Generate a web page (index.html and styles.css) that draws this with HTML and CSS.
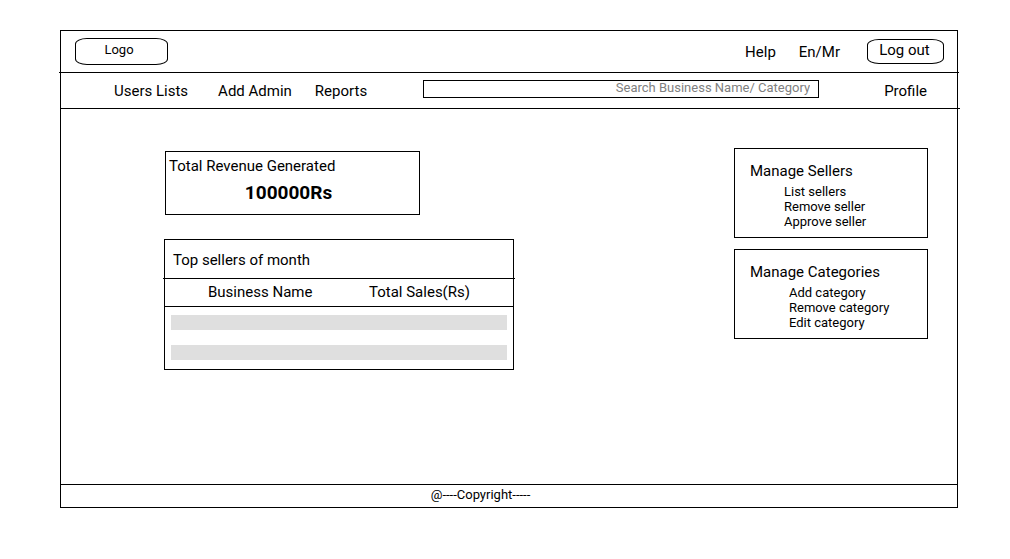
FILE: index.html
```html
<!DOCTYPE html>
<html lang="en">
<head>
<meta charset="utf-8">
<title>Admin Dashboard</title>
<link rel="stylesheet" href="styles.css">
</head>
<body>
<div class="page">
  <header class="topbar">
    <a class="logo" href="#">Logo</a>
    <div class="actions">
      <a class="help" href="#">Help</a>
      <a class="language" href="#">En/Mr</a>
      <button class="logout" type="button">Log out</button>
    </div>
  </header>
  <nav class="navbar">
    <div class="links">
      <a href="#">Users Lists</a>
      <a href="#">Add Admin</a>
      <a href="#">Reports</a>
    </div>
    <input class="search" type="text" aria-label="Search" placeholder="Search Business Name/ Category">
    <a class="profile" href="#">Profile</a>
  </nav>
  <main class="content">
    <div class="stats">
      <section class="revenue">
        <h2>Total Revenue Generated</h2>
        <p class="amount">100000Rs</p>
      </section>
      <section class="sellers">
        <h2>Top sellers of month</h2>
        <table>
          <thead>
            <tr><th class="name">Business Name</th><th class="sales">Total Sales(Rs)</th></tr>
          </thead>
          <tbody>
            <tr><td colspan="2"><div class="bar"></div></td></tr>
            <tr><td colspan="2"><div class="bar"></div></td></tr>
          </tbody>
        </table>
      </section>
    </div>
    <aside class="manage">
      <section class="panel">
        <h2>Manage Sellers</h2>
        <ul class="seller-list">
          <li><a href="#">List sellers</a></li>
          <li><a href="#">Remove seller</a></li>
          <li><a href="#">Approve seller</a></li>
        </ul>
      </section>
      <section class="panel">
        <h2>Manage Categories</h2>
        <ul class="category-list">
          <li><a href="#">Add category</a></li>
          <li><a href="#">Remove category</a></li>
          <li><a href="#">Edit category</a></li>
        </ul>
      </section>
    </aside>
  </main>
  <footer class="footer">@----Copyright-----</footer>
</div>
</body>
</html>
```
FILE: styles.css
```css
* { box-sizing: border-box; }

body {
  margin: 0;
  padding: 30px 52px 51px 60px;
  min-height: 100vh;
  display: flex;
  background: #fff;
  color: #000;
  font: 15px/18px Roboto, sans-serif;
}

a { color: inherit; text-decoration: none; }
h2, p, ul { margin: 0; padding: 0; font-size: inherit; font-weight: 400; }
ul { list-style: none; }

.page {
  flex: 1;
  display: flex;
  flex-direction: column;
  border: 1px solid #000;
}

/* The rules under both bars run slightly past the frame. */
.topbar {
  display: flex;
  justify-content: space-between;
  align-items: center;
  height: 42px;
  margin: 0 -2px;
  padding: 0 15px 0 16px;
  border-bottom: 1px solid #000;
}

.logo {
  width: 93px;
  height: 27px;
  border: 1px solid #000;
  border-radius: 12px / 6px;
  padding-right: 5px;
  text-align: center;
  font-size: 13px;
  line-height: 22px;
}

.actions { display: flex; align-items: center; }
.help { margin-right: 23px; }
.language { margin-right: 27px; }

.logout {
  width: 77px;
  height: 25px;
  padding: 0 2px 3px 0;
  border: 1px solid #000;
  border-radius: 12px / 6px;
  background: #fff;
  color: #000;
  font: inherit;
}

.navbar {
  display: flex;
  align-items: center;
  height: 36px;
  margin-right: -3px;
  padding: 0 33px 0 53px;
  border-bottom: 1px solid #000;
}

.links { display: flex; }
.links a { margin-right: 30px; }
.links a:nth-child(2) { margin-right: 23px; }

.search {
  flex: 1;
  min-width: 0;
  height: 18px;
  margin: 0 65px 4px 26px;
  padding: 0 8px 2px;
  border: 1px solid #000;
  border-radius: 0;
  background: #fff;
  font: 13px/15px Roboto, sans-serif;
  text-align: right;
}
.search::placeholder { color: #808080; opacity: 1; }

.content {
  flex: 1;
  display: flex;
  justify-content: space-between;
  align-items: flex-start;
  padding: 39px 29px 20px 103px;
}

.stats {
  width: 350px;
  padding-top: 3px;
}

.revenue {
  width: 255px;
  min-height: 64px;
  margin: 0 0 24px 1px;
  padding: 5px 3px 0;
  border: 1px solid #000;
}

.amount {
  padding: 6px 8px 0 0;
  text-align: center;
  font-size: 19px;
  line-height: 24px;
  font-weight: 700;
}

.sellers {
  padding-bottom: 2px;
  border: 1px solid #000;
}
.sellers h2 {
  margin: 0 -2px;
  padding: 11px 10px 9px;
  border-bottom: 1px solid #000;
}

table {
  width: 100%;
  border-collapse: collapse;
}
thead tr { height: 27px; border-bottom: 1px solid #000; }
th { padding: 0 0 1px; font-weight: 400; text-align: left; }
.name { width: 204px; padding-left: 43px; }
td { padding: 8px 6px 7px; }
.bar { height: 15px; background: #dfdfdf; }

.manage {
  width: 194px;
  display: grid;
  gap: 11px;
}

.panel {
  min-height: 90px;
  padding: 13px 15px 0;
  border: 1px solid #000;
}
.panel ul {
  padding-top: 4px;
  font-size: 13px;
  line-height: 15px;
}
.panel .seller-list { padding-left: 34px; }
.panel .category-list { padding-left: 39px; }

.footer {
  height: 23px;
  padding-right: 57px;
  border-top: 1px solid #000;
  text-align: center;
  font-size: 13px;
  line-height: 20px;
}
```
